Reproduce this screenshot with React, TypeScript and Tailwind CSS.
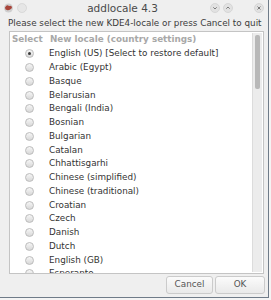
import React from "react";

const LOCALES = [
  "English (US) [Select to restore default]",
  "Arabic (Egypt)",
  "Basque",
  "Belarusian",
  "Bengali (India)",
  "Bosnian",
  "Bulgarian",
  "Catalan",
  "Chhattisgarhi",
  "Chinese (simplified)",
  "Chinese (traditional)",
  "Croatian",
  "Czech",
  "Danish",
  "Dutch",
  "English (GB)",
  "Esperanto",
];

function Radio({ checked }: { checked: boolean }) {
  return (
    <span className="w-[9px] h-[9px] rounded-full border border-[#bcbcbc] bg-gradient-to-b from-[#f6f6f6] to-[#d8d8d8] flex items-center justify-center">
      {checked && <span className="w-[3px] h-[3px] rounded-full bg-[#3a3a3a]" />}
    </span>
  );
}

function TitleButton({ kind }: { kind: "min" | "max" | "close" }) {
  return (
    <svg width="10" height="10" viewBox="0 0 10 10">
      <circle cx="5" cy="5" r="4.5" fill="#e2e2e2" stroke="#d2d2d2" strokeWidth="0.8" />
      {kind === "min" && <path d="M3.3 4.3 L5 6 L6.7 4.3" stroke="#7a7a7a" strokeWidth="1" fill="none" />}
      {kind === "max" && <path d="M3.3 5.7 L5 4 L6.7 5.7" stroke="#7a7a7a" strokeWidth="1" fill="none" />}
      {kind === "close" && <path d="M3.5 3.5 L6.5 6.5 M6.5 3.5 L3.5 6.5" stroke="#7a7a7a" strokeWidth="1" fill="none" />}
    </svg>
  );
}

export default function App() {
  return (
    <div className="w-[271px] h-[300px] bg-[#f4f4f4] overflow-hidden" style={{ fontFamily: '"DejaVu Sans", sans-serif' }}>
      <div className="w-[269px] h-[298px] bg-[#efefef] border-r border-b border-[#6f7b88] flex flex-col">
        {/* title bar */}
        <div className="h-[16px] flex items-center pl-[3px] pr-[4px]">
          <div className="flex items-center gap-[3px]">
            <svg width="11" height="10" viewBox="0 0 11 10">
              <circle cx="5.5" cy="5" r="4.5" fill="#cfcfcf" />
              <path d="M2 4.5 Q4 1 6 3 Q9 2 9 5 Q6 8 4 7 Q2 7 2 4.5Z" fill="#a8443a" />
            </svg>
            <svg width="10" height="10" viewBox="0 0 10 10">
              <circle cx="5" cy="5" r="4.5" fill="#e6e6e6" stroke="#d4d4d4" strokeWidth="0.8" />
            </svg>
          </div>
          <div className="flex-1 text-center text-[10.5px] text-[#4a4a4a] leading-none pl-[8px]">addlocale 4.3</div>
          <div className="flex items-center gap-[3px]">
            <TitleButton kind="min" />
            <TitleButton kind="max" />
            <span className="w-[15px]" />
            <TitleButton kind="close" />
          </div>
        </div>

        {/* instruction */}
        <div className="h-[14px] pl-[8px] text-[8.8px] leading-[14px] text-[#3c3c3c] whitespace-nowrap">
          Please select the new KDE4-locale or press Cancel to quit
        </div>

        {/* list box */}
        <div className="ml-[9px] mt-[1px] w-[255px] h-[243px] bg-white border border-[#c4c4c4] flex overflow-hidden">
          <div className="flex-1 flex flex-col overflow-hidden">
            <div className="h-[15px] flex items-center text-[8.8px] font-bold text-[#a8a8a8] shrink-0 whitespace-nowrap">
              <span className="pl-[2px] w-[40px] shrink-0">Select</span>
              <span>New locale (country settings)</span>
            </div>
            {LOCALES.map((name, i) => (
              <div key={name} className="h-[13.75px] flex items-center shrink-0 text-[8.8px] text-[#333]">
                <span className="w-[39px] flex justify-center shrink-0">
                  <Radio checked={i === 0} />
                </span>
                <span className="whitespace-nowrap">{name}</span>
              </div>
            ))}
          </div>
          <div className="w-[10px] mr-[1px] my-[1px] bg-[#ececec] border-l border-[#dcdcdc] flex justify-center pt-[2px]">
            <div className="w-[5px] h-[54px] rounded-[2px] bg-[#b8b8b8]" />
          </div>
        </div>

        {/* buttons */}
        <div className="flex justify-end gap-[2px] pr-[3px] mt-[2px]">
          <button className="w-[47px] h-[18px] rounded-[3px] border border-[#cbcbcb] bg-gradient-to-b from-[#fbfbfb] to-[#e9e9e9] text-[8.8px] text-[#555]">
            Cancel
          </button>
          <button className="w-[50px] h-[18px] rounded-[3px] border border-[#cbcbcb] bg-gradient-to-b from-[#fbfbfb] to-[#e9e9e9] text-[8.8px] text-[#555]">
            OK
          </button>
        </div>
      </div>
    </div>
  );
}
